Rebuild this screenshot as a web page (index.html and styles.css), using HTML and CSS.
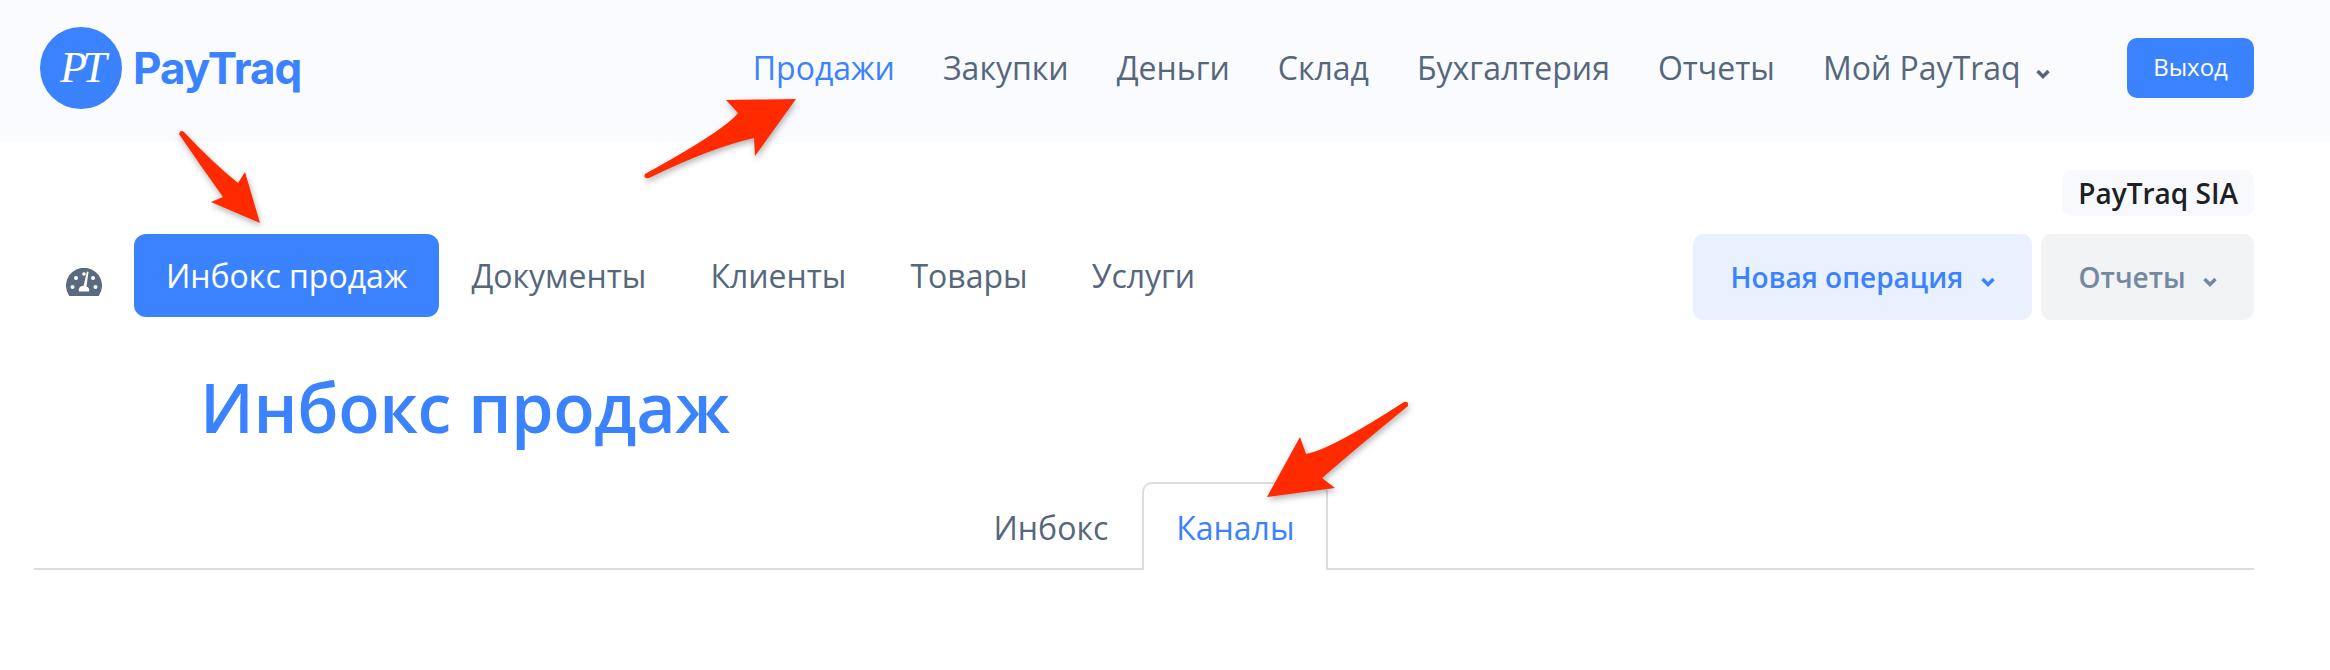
FILE: index.html
```html
<!DOCTYPE html>
<html lang="en">
<head>
    <meta charset="UTF-8">
    <meta name="viewport" content="width=device-width, initial-scale=1.0">
    <title>PayTraq</title>
    <link rel="stylesheet" href="styles.css">
</head>
<body>

    <header class="top-bar">
        <a class="logo" href="#">
            <span class="logo-mark">PT</span>
            <span class="logo-name">PayTraq</span>
        </a>
        <nav class="top-nav">
            <a class="active" href="#">Продажи</a>
            <a href="#">Закупки</a>
            <a href="#">Деньги</a>
            <a href="#">Склад</a>
            <a href="#">Бухгалтерия</a>
            <a href="#">Отчеты</a>
            <a href="#">Мой PayTraq
                <svg class="chevron" viewBox="0 0 16 12"><path d="M2.500 3 8 8.500 13.500 3" /></svg>
            </a>
        </nav>
        <a class="logout-btn" href="#">Выход</a>
    </header>

    <div class="company-row">
        <span class="company-badge">PayTraq SIA</span>
    </div>

    <div class="sub-bar">
        <a class="dash-icon" href="#">
            <svg viewBox="0 0 36 28" width="36" height="28">
                <path fill="#5a6b7f" d="M3.200 28A18 18 0 1 1 32.800 28Z" />
                <circle cx="6.500" cy="19" r="2" fill="#fff" />
                <circle cx="10" cy="10" r="2" fill="#fff" />
                <circle cx="18" cy="6" r="1.800" fill="#fff" />
                <circle cx="29.500" cy="19" r="2" fill="#fff" />
                <circle cx="27" cy="10" r="2" fill="#fff" />
                <path fill="#fff" d="M21 3.500 22.500 4 20.500 18.500A4 4 0 0 1 23 23.500H13A4 4 0 0 1 17.500 18Z" />
            </svg>
        </a>
        <nav class="sub-nav">
            <a class="active" href="#">Инбокс продаж</a>
            <a href="#">Документы</a>
            <a href="#">Клиенты</a>
            <a href="#">Товары</a>
            <a href="#">Услуги</a>
        </nav>
        <div class="sub-actions">
            <a class="action-btn action-new" href="#">Новая операция
                <svg class="chevron" viewBox="0 0 16 12"><path d="M2.500 3 8 8.500 13.500 3" /></svg>
            </a>
            <a class="action-btn action-reports" href="#">Отчеты
                <svg class="chevron" viewBox="0 0 16 12"><path d="M2.500 3 8 8.500 13.500 3" /></svg>
            </a>
        </div>
    </div>

    <h1 class="page-title">Инбокс продаж</h1>

    <div class="tabs">
        <a class="tab" href="#">Инбокс</a>
        <a class="tab selected" href="#">Каналы</a>
    </div>

    <!-- annotation arrows drawn over the screenshot -->
    <svg class="arrows" viewBox="0 0 2330 670" width="2330" height="670">
        <path d="M179 134Q180 129 184 132Q212 162 238 183L245 172L260 223L211 202L223 197Q200 165 179 134Z" />
        <path d="M796 99L726 100L738 113Q725 130 645 174Q643 179 649 178Q710 148 754 138L755 156Z" />
        <path d="M1404 402Q1409 401 1408 406Q1360 445 1322 478L1335 488L1267 497L1300 437L1306 454Q1330 450 1404 402Z" />
    </svg>

</body>
</html>
```

FILE: styles.css
```css
body {
    font-family: "Open Sans", "Noto Sans", sans-serif;
    margin: 0;
    background-color: #fff;
    color: #56677c;
    font-size: 32px;
    position: relative;
    height: 670px;
    overflow: hidden;
}
a {
    color: inherit;
    text-decoration: none;
}
.top-bar {
    display: flex;
    align-items: center;
    height: 141px;
    padding: 0 76px 6px 40px;
    box-sizing: border-box;
    background-color: #f9fbff;
}
.logo {
    display: flex;
    align-items: center;
    gap: 11px;
}
.logo-mark {
    display: flex;
    align-items: center;
    justify-content: center;
    width: 82px;
    height: 82px;
    border-radius: 50%;
    background-color: #3b82ff;
    color: #fff;
    font-family: "Liberation Serif", serif;
    font-style: italic;
    font-size: 44px;
    letter-spacing: -5px;
}
.logo-name {
    font-family: "Inter", sans-serif;
    font-weight: 700;
    font-size: 44px;
    letter-spacing: -1px;
    color: #3b82ff;
}
.top-nav {
    display: flex;
    align-items: center;
    gap: 48px;
    margin-left: auto;
}
.top-nav .active {
    color: #3b82ff;
}
.chevron {
    width: 16px;
    height: 12px;
    margin-left: 6px;
    fill: none;
    stroke: currentColor;
    stroke-width: 3.500;
}
.logout-btn {
    margin-left: 76px;
    width: 127px;
    height: 60px;
    line-height: 58px;
    text-align: center;
    border-radius: 10px;
    background-color: #3b82ff;
    color: #fff;
    font-size: 24px;
}
.company-row {
    display: flex;
    justify-content: flex-end;
    padding: 29px 76px 18px 0;
}
.company-badge {
    height: 46px;
    line-height: 46px;
    padding: 0 16px;
    border-radius: 10px;
    background-color: #f8f9fc;
    color: #1d2024;
    font-size: 28px;
    font-weight: 600;
}
.sub-bar {
    display: flex;
    align-items: flex-start;
    height: 86px;
    padding: 0 76px 0 66px;
}
.dash-icon {
    margin: 28px 32px 0 0;
    height: 28px;
}
.sub-nav {
    display: flex;
}
.sub-nav a {
    height: 83px;
    line-height: 83px;
    padding: 0 32px;
}
.sub-nav .active {
    border-radius: 12px;
    background-color: #3b82ff;
    color: #fff;
}
.sub-actions {
    display: flex;
    gap: 9px;
    margin-left: auto;
}
.action-btn {
    height: 86px;
    line-height: 86px;
    padding: 0 36px 0 38px;
    border-radius: 10px;
    font-size: 28px;
    font-weight: 600;
}
.action-btn .chevron {
    margin-left: 9px;
}
.action-new {
    background-color: #e9f1fe;
    color: #3b82ff;
}
.action-reports {
    background-color: #f1f3f5;
    color: #7488a0;
}
.page-title {
    margin: 0;
    padding: 42px 0 30px 200px;
    font-size: 68px;
    line-height: 90px;
    font-weight: 600;
    letter-spacing: -0.350px;
    color: #3b82ff;
}
.tabs {
    display: flex;
    justify-content: center;
    height: 86px;
    margin: 0 76px 0 34px;
    border-bottom: 2px solid #ddd;
}
.tab {
    height: 86px;
    line-height: 88px;
    padding: 0 32px;
    border: 2px solid transparent;
    border-bottom: 0;
}
.tab.selected {
    border-color: #ddd;
    border-radius: 10px 10px 0 0;
    background-color: #fff;
    color: #3b82ff;
    margin-bottom: -2px;
}
.arrows {
    position: absolute;
    left: 0;
    top: 0;
    pointer-events: none;
}
.arrows path {
    fill: #ff2a00;
    filter: drop-shadow(1px 3px 3px rgba(0, 0, 0, 0.3));
}
```
